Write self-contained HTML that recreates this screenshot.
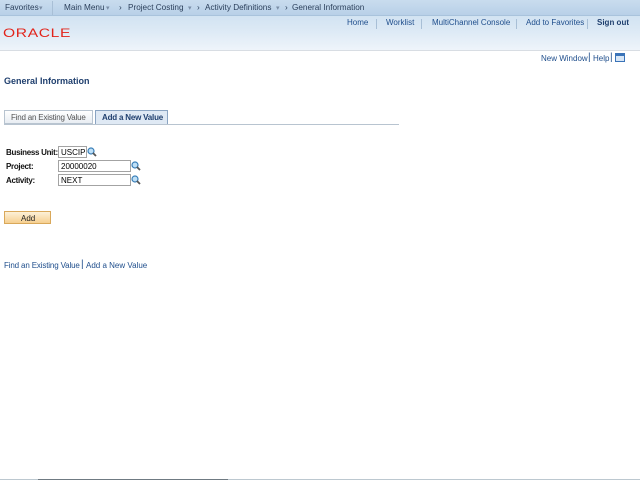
<!DOCTYPE html>
<html><head><meta charset="utf-8"><style>
*{margin:0;padding:0;box-sizing:border-box}
body{width:640px;height:480px;overflow:hidden;background:#fff;font-family:"Liberation Sans",Arial,sans-serif;font-size:8px;position:relative;color:#000}
.a{position:absolute;white-space:nowrap}
#hdr{position:absolute;left:0;top:0;width:640px;height:50px;background:linear-gradient(#c6dcef,#dce9f5 60%,#eef4fa)}
#nav{position:absolute;left:0;top:0;width:640px;height:16px;background:linear-gradient(#c9dcee,#b8d0e8);border-bottom:1px solid #a9c3dc}
.nv{color:#2b3f5a;font-size:8.2px;top:3px}
.ar{color:#7a8ea6;font-size:7px;top:4px}
.lk{color:#1f4e8c;font-size:8px}
.sep{position:absolute;width:1px;background:#a8bfd6}
.in{position:absolute;height:12px;border:1px solid #a3a3a3;background:#fff;font-size:8px;padding:1px 0 0 2px}
.mg{position:absolute;width:10px;height:10px}
.lb{font-weight:bold;font-size:8px;color:#111;letter-spacing:-0.3px}
</style></head><body>
<div id="hdr"></div>
<div id="nav"></div>
<div class="a nv" style="left:5px">Favorites</div>
<div class="a ar" style="left:39px">▾</div>
<div class="sep" style="left:52px;top:1px;height:14px"></div>
<div class="a nv" style="left:64px">Main Menu</div>
<div class="a ar" style="left:106px">▾</div>
<div class="a nv" style="left:119px">›</div>
<div class="a nv" style="left:128px">Project Costing</div>
<div class="a ar" style="left:188px">▾</div>
<div class="a nv" style="left:197px">›</div>
<div class="a nv" style="left:205px">Activity Definitions</div>
<div class="a ar" style="left:276px">▾</div>
<div class="a nv" style="left:285px">›</div>
<div class="a nv" style="left:292px">General Information</div>
<div class="a lk" style="left:347px;top:18px">Home</div>
<div class="sep" style="left:376px;top:19px;height:10px"></div>
<div class="a lk" style="left:386px;top:18px">Worklist</div>
<div class="sep" style="left:421px;top:19px;height:10px"></div>
<div class="a lk" style="left:432px;top:18px">MultiChannel Console</div>
<div class="sep" style="left:516px;top:19px;height:10px"></div>
<div class="a lk" style="left:526px;top:18px">Add to Favorites</div>
<div class="sep" style="left:587px;top:19px;height:10px"></div>
<div class="a" style="left:597px;top:18px;font-weight:bold;color:#1f3f6e;font-size:8px">Sign out</div>
<div class="a" style="left:3px;top:26px;color:#e2231a;font-size:12px;letter-spacing:0.5px;transform:scaleX(1.3);transform-origin:left">ORACLE</div>
<div style="position:absolute;left:0;top:50px;width:640px;height:1px;background:#d8dde3"></div>
<div class="a lk" style="left:541px;top:54px">New Window</div>
<div class="a" style="left:588px;top:52px;font-size:10px;color:#1f4e8c">|</div>
<div class="a lk" style="left:593px;top:54px">Help</div>
<div class="a" style="left:610px;top:52px;font-size:10px;color:#1f4e8c">|</div>
<div style="position:absolute;left:615px;top:53px;width:10px;height:9px;border:1px solid #3a73b8;background:linear-gradient(#3a73b8 2px,#d7e6f6 2px)"></div>
<div class="a" style="left:4px;top:76px;font-weight:bold;font-size:9px;color:#1f3f6e">General Information</div>
<div style="position:absolute;left:4px;top:110px;width:89px;height:14px;border:1px solid #b8c4d0;background:linear-gradient(#fff,#e8edf3)"></div>
<div class="a" style="left:11px;top:113px;color:#555;letter-spacing:-0.2px">Find an Existing Value</div>
<div style="position:absolute;left:95px;top:110px;width:73px;height:14px;border:1px solid #8aa4c2;border-bottom:none;background:#dfe9f4"></div>
<div class="a" style="left:102px;top:113px;font-weight:bold;color:#1f3f6e;letter-spacing:-0.2px">Add a New Value</div>
<div style="position:absolute;left:4px;top:124px;width:395px;height:1px;background:#b8c4d0"></div>
<div class="a lb" style="left:6px;top:148px">Business Unit:</div>
<div class="in" style="left:58px;top:146px;width:29px">USCIP</div>
<div class="a lb" style="left:6px;top:162px">Project:</div>
<div class="in" style="left:58px;top:160px;width:73px">20000020</div>
<div class="a lb" style="left:6px;top:176px">Activity:</div>
<div class="in" style="left:58px;top:174px;width:73px">NEXT</div>
<svg class="mg" style="left:87px;top:147px" viewBox="0 0 10 10"><circle cx="4" cy="4" r="3" fill="#bfe0f7" stroke="#3a7fb8" stroke-width="1.2"/><path d="M6 6 9 9" stroke="#555" stroke-width="1.8"/></svg>
<svg class="mg" style="left:131px;top:161px" viewBox="0 0 10 10"><circle cx="4" cy="4" r="3" fill="#bfe0f7" stroke="#3a7fb8" stroke-width="1.2"/><path d="M6 6 9 9" stroke="#555" stroke-width="1.8"/></svg>
<svg class="mg" style="left:131px;top:175px" viewBox="0 0 10 10"><circle cx="4" cy="4" r="3" fill="#bfe0f7" stroke="#3a7fb8" stroke-width="1.2"/><path d="M6 6 9 9" stroke="#555" stroke-width="1.8"/></svg>
<div style="position:absolute;left:4px;top:211px;width:47px;height:13px;border:1px solid #d9a85a;background:linear-gradient(#fdf0d8,#f6cf90)"></div>
<div class="a" style="left:21px;top:214px;color:#222">Add</div>
<div class="a lk" style="left:4px;top:261px;letter-spacing:-0.15px">Find an Existing Value</div>
<div class="a" style="left:81px;top:259px;font-size:10px;color:#1f4e8c">|</div>
<div class="a lk" style="left:86px;top:261px">Add a New Value</div>
<div style="position:absolute;left:0;top:479px;width:640px;height:1px;background:#bcc8d0"></div>
<div style="position:absolute;left:38px;top:479px;width:190px;height:1px;background:#6f7a82"></div>
</body></html>
